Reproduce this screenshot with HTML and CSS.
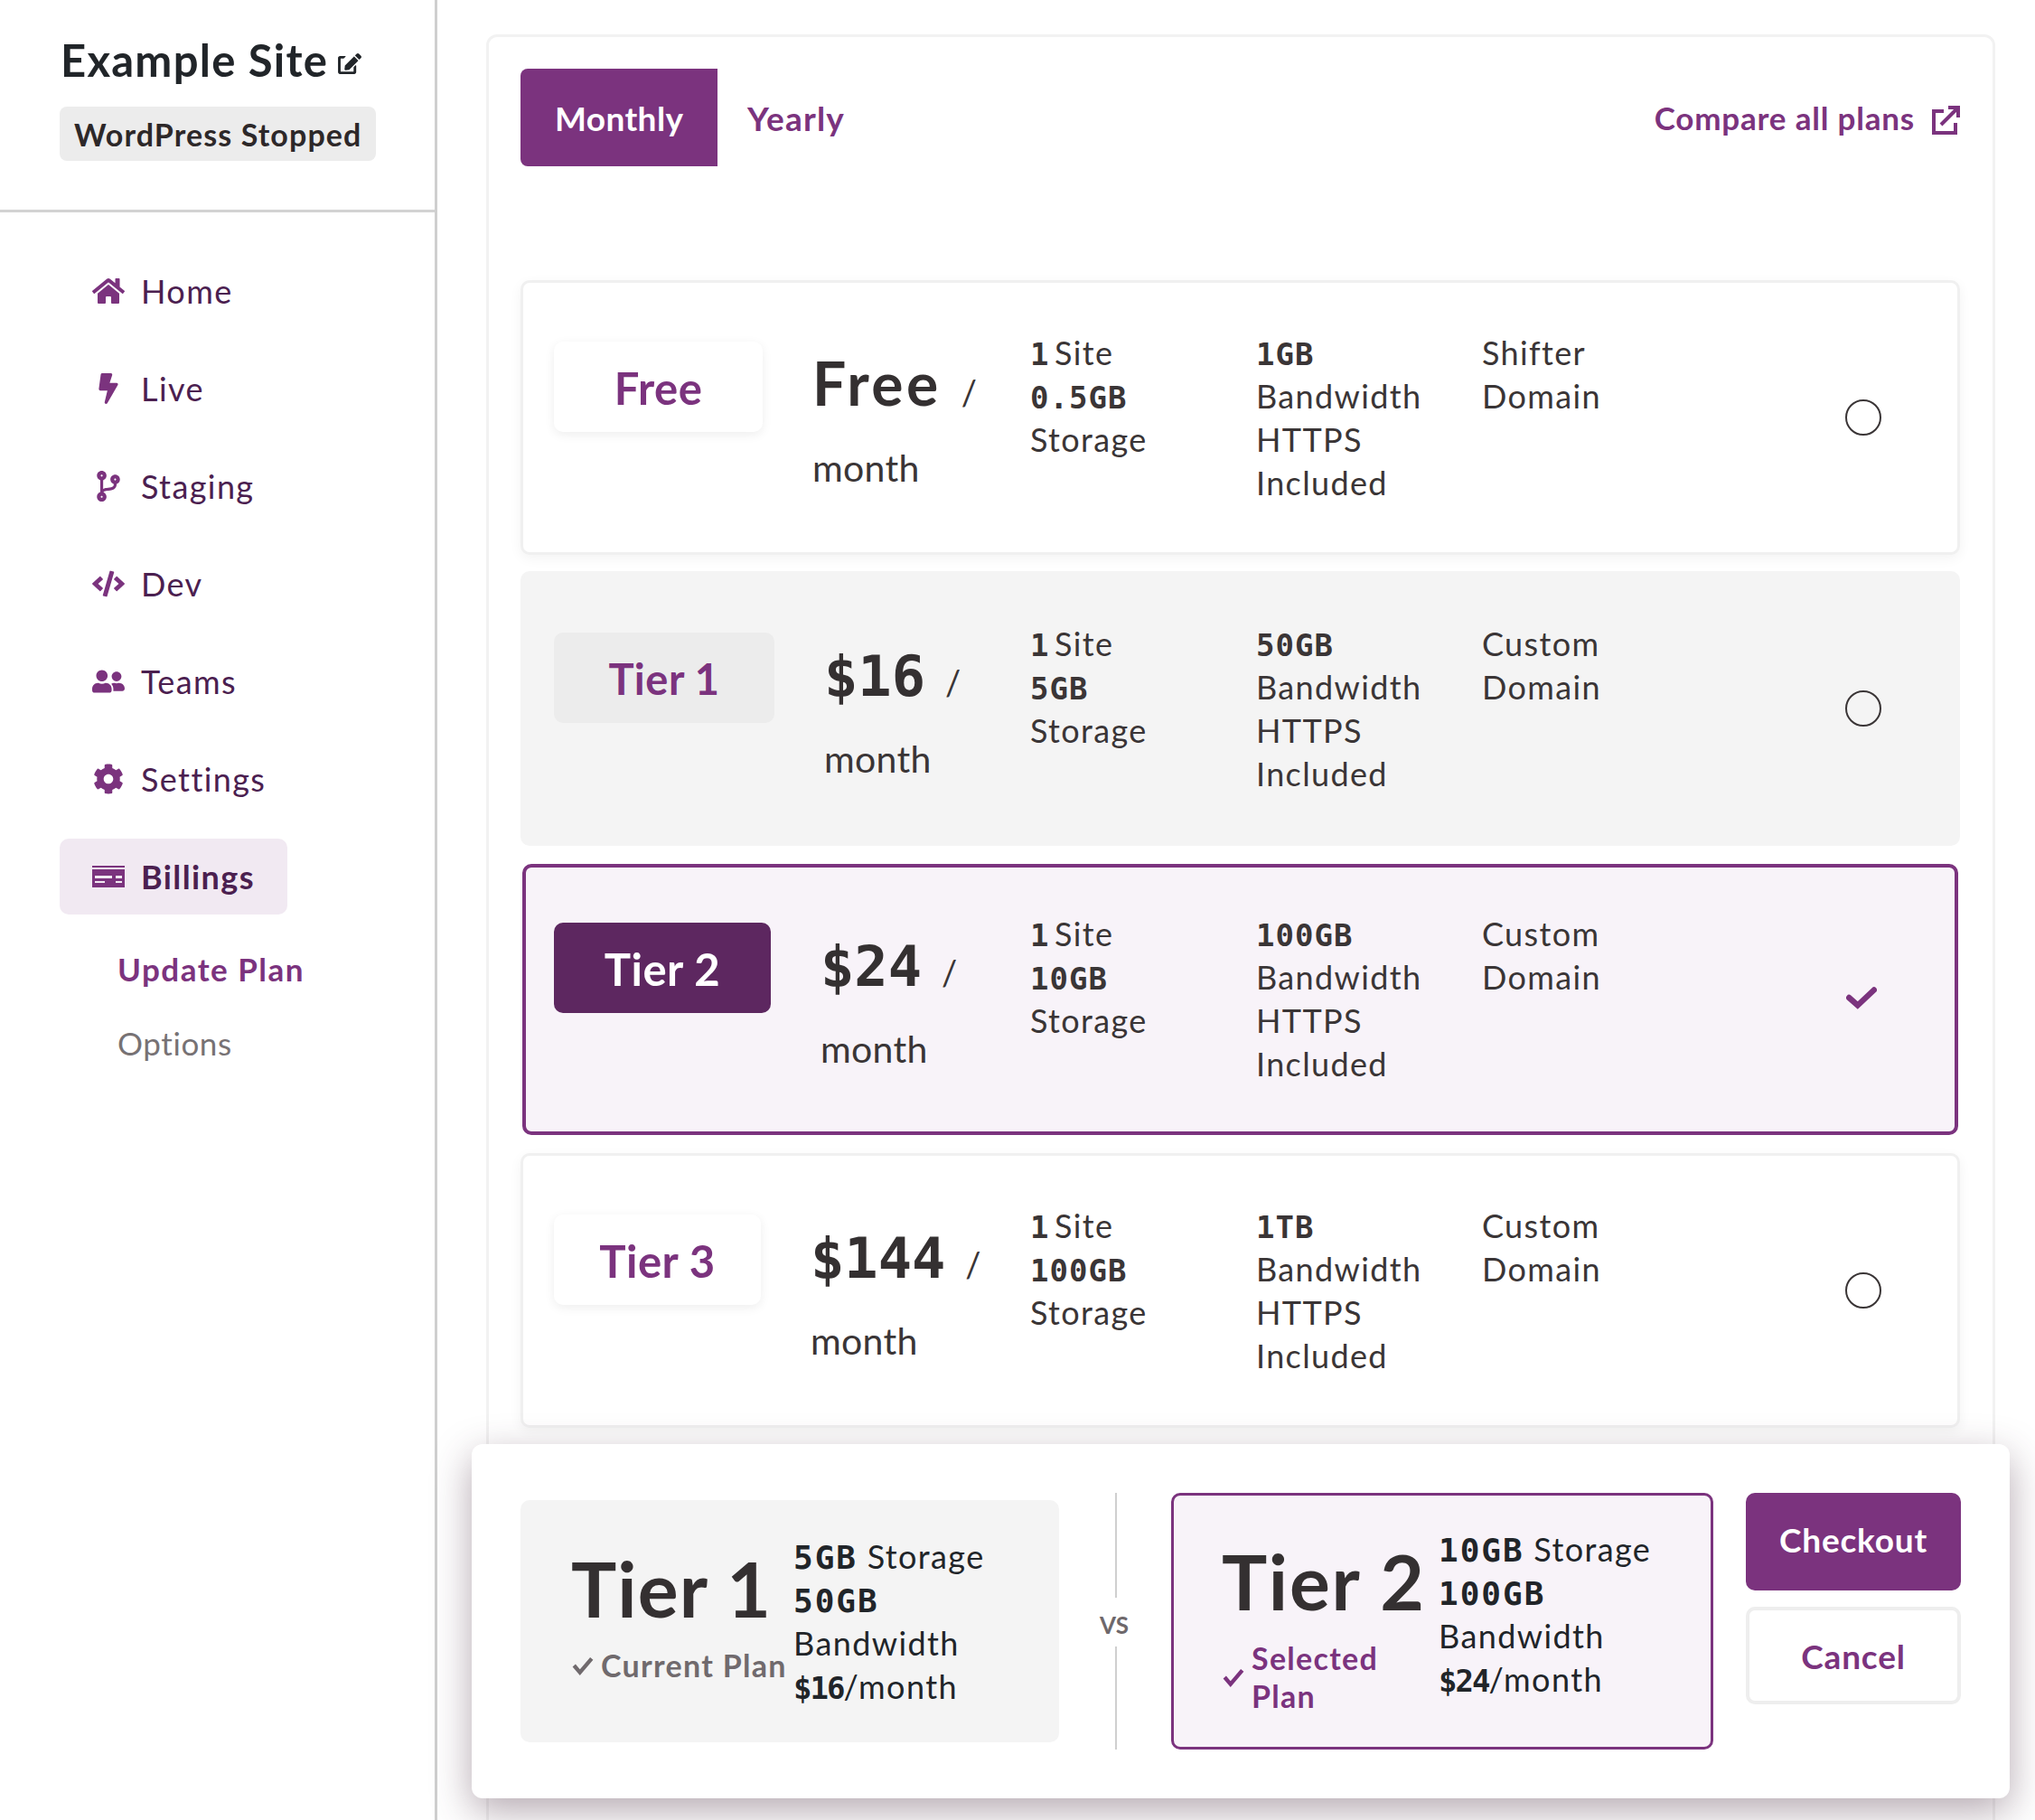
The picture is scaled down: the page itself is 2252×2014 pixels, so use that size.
FILE: index.html
```html
<!DOCTYPE html>
<html lang="en">
<head>
<meta charset="utf-8">
<title>Update Plan</title>
<link rel="stylesheet" href="styles.css">
</head>
<body>
<div class="app">
  <aside class="sidebar">
    <header class="site">
      <h1 class="site-title">Example Site
        <svg class="edit-icon" viewBox="0 0 576 512"><path d="M402.6 83.2l90.2 90.2c3.8 3.8 3.8 10 0 13.8L274.4 405.6l-92.8 10.3c-12.4 1.4-22.9-9.1-21.5-21.5l10.3-92.8L388.8 83.2c3.8-3.8 10-3.8 13.8 0zm162-22.9l-48.8-48.8c-15.2-15.2-39.9-15.2-55.2 0l-35.4 35.4c-3.8 3.8-3.8 10 0 13.8l90.2 90.2c3.8 3.8 10 3.8 13.8 0l35.4-35.4c15.2-15.3 15.2-40 0-55.2zM384 346.2V448H64V128h73.1c3.2 0 6.2-1.3 8.5-3.5l40-40c7.6-7.6 2.2-20.5-8.5-20.5H48C21.5 64 0 85.5 0 112v352c0 26.5 21.5 48 48 48h352c26.5 0 48-21.5 48-48V306.2c0-10.7-12.9-16-20.5-8.5l-40 40c-2.2 2.3-3.5 5.3-3.5 8.5z"/></svg>
      </h1>
      <span class="status">WordPress Stopped</span>
    </header>
    <nav class="nav">
      <a class="nav-item"><span class="nav-icon"><svg viewBox="0 0 576 512"><path d="M280.37 148.26L96 300.11V464a16 16 0 0 0 16 16l112.06-.29a16 16 0 0 0 15.92-16V368a16 16 0 0 1 16-16h64a16 16 0 0 1 16 16v95.64a16 16 0 0 0 16 16.05L464 480a16 16 0 0 0 16-16V300L295.67 148.26a12.19 12.19 0 0 0-15.3 0zM571.6 251.47L488 182.56V44.05a12 12 0 0 0-12-12h-56a12 12 0 0 0-12 12v72.61L318.47 43a48 48 0 0 0-61 0L4.34 251.47a12 12 0 0 0-1.6 16.9l25.5 31A12 12 0 0 0 45.15 301l235.22-193.74a12.19 12.19 0 0 1 15.3 0L530.9 301a12 12 0 0 0 16.9-1.6l25.5-31a12 12 0 0 0-1.7-16.93z"/></svg></span>Home</a>
      <a class="nav-item"><span class="nav-icon"><svg viewBox="0 0 320 512"><path d="M296 160H180.6l42.6-129.8C227.2 15 215.7 0 200 0H56C44 0 33.8 8.9 32.2 20.8l-32 240C-1.7 275.2 9.5 288 24 288h118.7L96.6 482.5c-3.6 15.2 8 29.5 23.3 29.5 8.4 0 16.4-4.4 20.8-12l176-304c9.3-15.9-2.2-36-20.7-36z"/></svg></span>Live</a>
      <a class="nav-item"><span class="nav-icon"><svg viewBox="0 0 384 512"><path d="M384 144c0-44.2-35.8-80-80-80s-80 35.8-80 80c0 36.4 24.3 67.1 57.5 76.8-.6 16.1-4.2 28.5-11 36.9-15.4 19.2-49.3 22.4-85.2 25.7-28.2 2.6-57.4 5.4-81.3 16.9v-144c32.5-10.2 56-40.5 56-76.3 0-44.2-35.8-80-80-80S0 35.8 0 80c0 35.8 23.5 66.1 56 76.3v199.3C23.5 365.9 0 396.2 0 432c0 44.2 35.8 80 80 80s80-35.8 80-80c0-34-21.2-63.1-51.2-74.6 3.1-5.2 7.8-9.8 14.9-13.4 16.2-8.2 40.4-10.4 66.1-12.8 42.2-3.9 90-8.4 118.2-43.4 14-17.4 21.1-39.8 21.6-67.9 31.6-10.8 54.4-40.7 54.4-75.9zM80 64c8.8 0 16 7.2 16 16s-7.2 16-16 16-16-7.2-16-16 7.2-16 16-16zm0 384c-8.8 0-16-7.2-16-16s7.2-16 16-16 16 7.2 16 16-7.2 16-16 16zm224-320c8.8 0 16 7.2 16 16s-7.2 16-16 16-16-7.2-16-16 7.2-16 16-16z"/></svg></span>Staging</a>
      <a class="nav-item"><span class="nav-icon"><svg viewBox="0 0 640 512"><path d="M278.9 511.5l-61-17.7c-6.4-1.8-10-8.5-8.2-14.9L346.2 8.7c1.8-6.4 8.5-10 14.9-8.2l61 17.7c6.4 1.8 10 8.5 8.2 14.9L293.8 503.3c-1.9 6.4-8.5 10.1-14.9 8.2zm-114-112.2l43.5-46.4c4.6-4.9 4.3-12.7-.8-17.2L117 256l90.6-79.7c5.1-4.5 5.5-12.3.8-17.2l-43.5-46.4c-4.5-4.8-12.1-5.1-17-.5L3.8 247.2c-5.1 4.7-5.1 12.8 0 17.5l144.1 135.1c4.9 4.6 12.5 4.4 17-.5zm327.2.6l144.1-135.1c5.1-4.7 5.1-12.8 0-17.5L492.1 112.1c-4.8-4.5-12.4-4.3-17 .5L431.6 159c-4.6 4.9-4.3 12.7.8 17.2L523 256l-90.6 79.7c-5.1 4.5-5.5 12.3-.8 17.2l43.5 46.4c4.5 4.9 12.1 5.1 17 .6z"/></svg></span>Dev</a>
      <a class="nav-item"><span class="nav-icon"><svg viewBox="0 0 640 512"><path d="M192 256c61.9 0 112-50.1 112-112S253.9 32 192 32 80 82.1 80 144s50.1 112 112 112zm76.8 32h-8.3c-20.8 10-43.9 16-68.5 16s-47.6-6-68.5-16h-8.3C51.6 288 0 339.6 0 403.2V432c0 26.5 21.5 48 48 48h288c26.5 0 48-21.5 48-48v-28.8c0-63.6-51.6-115.2-115.2-115.2zM480 256c53 0 96-43 96-96s-43-96-96-96-96 43-96 96 43 96 96 96zm48 32h-3.8c-13.9 4.8-28.6 8-44.2 8s-30.3-3.2-44.2-8H432c-20.4 0-39.2 5.9-55.7 15.4 24.4 26.3 39.7 61.2 39.7 99.8v38.4c0 2.2-.5 4.3-.6 6.4H592c26.5 0 48-21.5 48-48 0-61.9-50.1-112-112-112z"/></svg></span>Teams</a>
      <a class="nav-item"><span class="nav-icon"><svg viewBox="0 0 512 512"><path d="M487.4 315.7l-42.6-24.6c4.3-23.2 4.3-47 0-70.2l42.6-24.6c4.9-2.8 7.1-8.6 5.5-14-11.1-35.6-30-67.8-54.7-94.6-3.8-4.1-10-5.1-14.8-2.3L380.8 110c-17.9-15.4-38.5-27.3-60.8-35.1V25.8c0-5.6-3.9-10.5-9.4-11.7-36.7-8.2-74.3-7.8-109.2 0-5.5 1.2-9.4 6.1-9.4 11.7V75c-22.2 7.9-42.8 19.8-60.8 35.1L88.7 85.5c-4.9-2.8-11-1.9-14.8 2.3-24.7 26.7-43.6 58.9-54.7 94.6-1.7 5.4.6 11.2 5.5 14L67.3 221c-4.3 23.2-4.3 47 0 70.2l-42.6 24.6c-4.9 2.8-7.1 8.6-5.5 14 11.1 35.6 30 67.8 54.7 94.6 3.8 4.1 10 5.1 14.8 2.3l42.6-24.6c17.9 15.4 38.5 27.3 60.8 35.1v49.2c0 5.6 3.9 10.5 9.4 11.7 36.7 8.2 74.3 7.8 109.2 0 5.5-1.2 9.4-6.1 9.4-11.7v-49.2c22.2-7.9 42.8-19.8 60.8-35.1l42.6 24.6c4.9 2.8 11 1.9 14.8-2.3 24.7-26.7 43.6-58.9 54.7-94.6 1.5-5.5-.7-11.3-5.6-14.1zM256 336c-44.1 0-80-35.9-80-80s35.9-80 80-80 80 35.9 80 80-35.9 80-80 80z"/></svg></span>Settings</a>
      <a class="nav-item nav-item--active"><span class="nav-icon"><svg viewBox="0 0 36 24"><path d="M0 0h36v2H0zM0 4h36v20H0zM3 11v3h19v-3zM26 11v3h7v-3zM3 17v2h11v-2zM26 17v2h7v-2z" fill-rule="evenodd"/></svg></span>Billings</a>
      <a class="sub-item sub-item--active">Update Plan</a>
      <a class="sub-item">Options</a>
    </nav>
  </aside>

  <main class="main">
    <section class="panel">
      <div class="toolbar">
        <div class="tabs">
          <a class="tab tab--active">Monthly</a>
          <a class="tab">Yearly</a>
        </div>
        <a class="compare">Compare all plans
          <svg class="compare-icon" viewBox="0 0 32 32"><path d="M14 6H3v24h24V19" /><path d="M11 21L29 3M19 2h11v11" /></svg>
        </a>
      </div>

      <div class="plans">
        <article class="plan">
          <div class="plan-main">
            <span class="plan-badge plan-badge--free">Free</span>
            <div class="price price--word"><div class="price-top"><b class="amount amount--word">Free</b> <span class="slash">/</span></div><div class="per">month</div></div>
          </div>
          <div class="feature"><span class="num num--one">1</span> Site<br><span class="num">0.5GB</span><br>Storage</div>
          <div class="feature"><span class="num">1GB</span><br>Bandwidth<br>HTTPS<br>Included</div>
          <div class="feature">Shifter<br>Domain</div>
          <span class="radio"></span>
        </article>

        <article class="plan plan--muted">
          <div class="plan-main">
            <span class="plan-badge plan-badge--t1">Tier 1</span>
            <div class="price"><div class="price-top"><b class="amount">$16</b> <span class="slash">/</span></div><div class="per">month</div></div>
          </div>
          <div class="feature"><span class="num num--one">1</span> Site<br><span class="num">5GB</span><br>Storage</div>
          <div class="feature"><span class="num">50GB</span><br>Bandwidth<br>HTTPS<br>Included</div>
          <div class="feature">Custom<br>Domain</div>
          <span class="radio"></span>
        </article>

        <article class="plan plan--selected">
          <div class="plan-main">
            <span class="plan-badge plan-badge--t2">Tier 2</span>
            <div class="price"><div class="price-top"><b class="amount">$24</b> <span class="slash">/</span></div><div class="per">month</div></div>
          </div>
          <div class="feature"><span class="num num--one">1</span> Site<br><span class="num">10GB</span><br>Storage</div>
          <div class="feature"><span class="num">100GB</span><br>Bandwidth<br>HTTPS<br>Included</div>
          <div class="feature">Custom<br>Domain</div>
          <svg class="plan-check" viewBox="0 0 32 24"><path d="M3 12l9 8L29 4"/></svg>
        </article>

        <article class="plan">
          <div class="plan-main">
            <span class="plan-badge plan-badge--t3">Tier 3</span>
            <div class="price"><div class="price-top"><b class="amount">$144</b> <span class="slash">/</span></div><div class="per">month</div></div>
          </div>
          <div class="feature"><span class="num num--one">1</span> Site<br><span class="num">100GB</span><br>Storage</div>
          <div class="feature"><span class="num">1TB</span><br>Bandwidth<br>HTTPS<br>Included</div>
          <div class="feature">Custom<br>Domain</div>
          <span class="radio"></span>
        </article>
      </div>
    </section>
  </main>
</div>

<section class="summary">
  <div class="cmp cmp--current">
    <div class="cmp-head">
      <div class="cmp-name">Tier 1</div>
      <div class="cmp-note cmp-note--current"><svg class="note-check" viewBox="0 0 24 20"><path d="M3 10l6 7L21 3"/></svg><span>Current Plan</span></div>
    </div>
    <div class="cmp-specs"><span class="num">5GB</span> Storage<br><span class="num">50GB</span><br>Bandwidth<br><span class="num num--price">$16</span>/month</div>
  </div>
  <div class="versus">
    <span class="versus-line"></span>
    <span class="versus-text">VS</span>
    <span class="versus-line versus-line--low"></span>
  </div>
  <div class="cmp cmp--new">
    <div class="cmp-head">
      <div class="cmp-name">Tier 2</div>
      <div class="cmp-note cmp-note--new"><svg class="note-check" viewBox="0 0 24 20"><path d="M3 10l6 7L21 3"/></svg><span>Selected<br>Plan</span></div>
    </div>
    <div class="cmp-specs"><span class="num">10GB</span> Storage<br><span class="num">100GB</span><br>Bandwidth<br><span class="num num--price">$24</span>/month</div>
  </div>
  <div class="actions">
    <a class="btn btn--primary">Checkout</a>
    <a class="btn btn--ghost">Cancel</a>
  </div>
</section>
</body>
</html>
```

FILE: styles.css
```css
* { box-sizing: border-box; }
html, body { margin: 0; height: 2014px; overflow: hidden; background: #fff; }
body { position: relative; font-family: "Lato", "Noto Sans", sans-serif; color: #3a3536; font-size: 36px; }
a { text-decoration: none; }

.app { display: flex; height: 2014px; }

/* sidebar */
.sidebar { width: 484px; flex: none; border-right: 3px solid #cfcfcf; }
.site { height: 235px; padding: 37px 0 0 66px; border-bottom: 3px solid #d2d2d2; }
.site-title { display: flex; align-items: center; margin: 0 0 0 1px; font-size: 49px; line-height: 58px; font-weight: 700; color: #212529; letter-spacing: 1.25px; white-space: nowrap; }
.edit-icon { width: 26px; height: 23px; margin: 8px 0 0 11px; fill: #212529; }
.status { display: inline-block; margin-top: 23px; height: 60px; width: 350px; padding-left: 16px; line-height: 62px; background: #ececec; border-radius: 8px; font-size: 34px; font-weight: 700; letter-spacing: 1.1px; color: #2d2829; white-space: nowrap; }

.nav { padding: 45px 0 0 66px; display: flex; flex-direction: column; align-items: flex-start; }
.nav-item { display: flex; align-items: center; height: 84px; margin-bottom: 24px; padding: 0 36px 0 36px; color: #4b2050; font-size: 36px; letter-spacing: 1.4px; border-radius: 10px; }
.nav-icon { width: 36px; height: 36px; margin-right: 18px; display: flex; align-items: center; justify-content: center; }
.nav-icon svg { height: 34px; width: 36px; fill: #7b337e; }
.nav-item--active { background: #f1e9f2; font-weight: 700; padding-right: 36px; width: 252px; margin-bottom: 28px; }
.sub-item { margin-left: 64px; height: 82px; line-height: 82px; font-size: 35px; color: #777274; letter-spacing: .6px; }
.sub-item--active { height: 64px; line-height: 64px; margin-bottom: 9px; color: #7b337e; font-weight: 700; letter-spacing: 1.5px; }

/* main */
.main { flex: 1; padding: 38px 44px 0 54px; min-width: 0; }
.panel { height: 2100px; padding: 35px 36px 0 35px; border: 3px solid #f2f2f2; border-radius: 12px; }
.toolbar { display: flex; justify-content: space-between; align-items: center; height: 108px; }
.tabs { display: flex; height: 108px; }
.tab { display: flex; align-items: center; height: 108px; padding: 0 33px; font-size: 37px; font-weight: 700; letter-spacing: 1.2px; color: #7b337e; }
.tab--active { width: 218px; padding: 0 0 0 38px; background: #7b337e; color: #fff; border-radius: 8px 0 0 8px; letter-spacing: .4px; }
.compare { display: flex; align-items: center; font-size: 35px; font-weight: 700; letter-spacing: .8px; color: #7b337e; }
.compare-icon { width: 32px; height: 32px; margin: 6px 0 0 18px; fill: none; stroke: #7b337e; stroke-width: 4; }

.plans { margin-top: 126px; display: flex; flex-direction: column; gap: 18px; }
.plan { display: flex; align-items: flex-start; height: 304px; padding: 53px 0 0 34px; background: #fff; border: 3px solid #f0f0f0; border-radius: 10px; box-shadow: 0 4px 14px rgba(0, 0, 0, .05); }
.plan--muted { background: #f4f4f4; border-color: #f4f4f4; box-shadow: none; }
.plan--selected { margin: 2px; height: 300px; padding: 49px 0 0 31px; background: #f8f3f9; border: 4px solid #7b337e; box-shadow: none; }

.plan-main { display: flex; align-items: flex-start; width: 527px; flex: none; }
.plan-badge { display: flex; align-items: center; justify-content: center; height: 100px; margin-top: 12px; padding-top: 2px; border-radius: 10px; font-size: 49px; font-weight: 700; letter-spacing: .5px; color: #7b337e; background: #fff; box-shadow: 0 3px 12px rgba(0, 0, 0, .07); flex: none; }
.plan-badge--free { width: 231px; }
.plan-badge--t1 { width: 244px; font-size: 47px; background: #ececec; box-shadow: none; }
.plan-badge--t2 { width: 240px; background: #5d2760; color: #fff; box-shadow: none; }
.plan-badge--t3 { width: 229px; }

.price { margin: 11px 0 0 55px; }
.price-top { display: flex; align-items: baseline; height: 100px; line-height: 100px; white-space: nowrap; }
.amount { font-family: "DejaVu Sans Mono", monospace; font-size: 62px; font-weight: 700; color: #343031; }
.amount--word { font-family: "Lato", sans-serif; font-size: 66px; letter-spacing: 3.5px; }
.slash { margin-left: 22px; font-size: 38px; }
.per { margin-top: 17px; line-height: 48px; font-size: 41px; letter-spacing: .3px; }
.price--word { margin-top: 8px; }
.price--word .per { margin-top: 20px; }

.feature { width: 250px; flex: none; line-height: 48px; font-size: 36px; letter-spacing: 1.35px; }
.num { font-family: "DejaVu Sans Mono", monospace; font-weight: 700; font-size: 34px; line-height: 1; letter-spacing: 1px; }
.num--one { letter-spacing: -4px; }
.cmp-specs .num { font-size: 36px; letter-spacing: 2px; }
.cmp-specs .num--price { font-size: 34px; letter-spacing: -2px; }

.radio { width: 40px; height: 40px; margin: 76px 0 0 152px; border: 2px solid #3a3536; border-radius: 50%; flex: none; }
.plan-check { width: 34px; height: 26px; margin: 82px 0 0 153px; fill: none; stroke: #7b337e; stroke-width: 6; stroke-linecap: round; flex: none; }

/* comparison bar */
.summary { position: absolute; left: 522px; top: 1598px; width: 1702px; height: 392px; display: flex; align-items: flex-start; padding: 54px 53px 0 54px; background: #fff; border-radius: 12px; box-shadow: 0 14px 44px rgba(70, 40, 60, .4); }
.cmp { display: flex; align-items: flex-start; flex: none; border-radius: 10px; }
.cmp--current { width: 596px; height: 268px; margin-top: 8px; padding: 41px 0 0 56px; background: #f4f4f4; }
.cmp--new { width: 600px; height: 284px; padding: 41px 0 0 53px; background: #f8f3f9; border: 3px solid #7b337e; }
.cmp--current .cmp-head { width: 246px; }
.cmp--new .cmp-head { width: 240px; }
.cmp-name { margin-top: 12px; font-size: 84px; line-height: 90px; font-weight: 700; letter-spacing: 1.2px; color: #343031; white-space: nowrap; }
.cmp--new .cmp-name { margin-top: 9px; letter-spacing: 1.8px; }
.cmp-note { display: flex; align-items: center; margin-top: 19px; font-size: 34px; line-height: 42px; font-weight: 700; letter-spacing: 1.3px; white-space: nowrap; }
.cmp-note--current { color: #706a6d; }
.cmp-note--new { color: #7b337e; margin-top: 19px; }
.note-check { width: 26px; height: 22px; margin-right: 7px; fill: none; stroke: currentColor; stroke-width: 4; flex: none; }
.cmp-specs { line-height: 48px; font-size: 36px; color: #212529; letter-spacing: 1.4px; white-space: nowrap; }
.cmp--current .cmp-specs { margin-top: -3px; }
.cmp--new .cmp-specs { margin-top: -6px; }

.versus { width: 124px; height: 284px; flex: none; display: flex; flex-direction: column; align-items: center; }
.versus-line { width: 2px; height: 116px; margin-left: 2px; background: #cfcfcf; flex: none; }
.versus-line--low { height: 114px; }
.versus-text { height: 54px; line-height: 60px; font-size: 26px; font-weight: 700; color: #6e686b; margin-left: -2px; }

.actions { width: 238px; margin-left: 36px; flex: none; display: flex; flex-direction: column; gap: 18px; }
.btn { display: flex; align-items: center; justify-content: center; height: 108px; border-radius: 10px; font-size: 37px; font-weight: 700; letter-spacing: .8px; color: #7b337e; }
.btn--primary { background: #7b337e; color: #fff; padding-bottom: 6px; }
.btn--ghost { border: 4px solid #eee; background: #fff; }
```
